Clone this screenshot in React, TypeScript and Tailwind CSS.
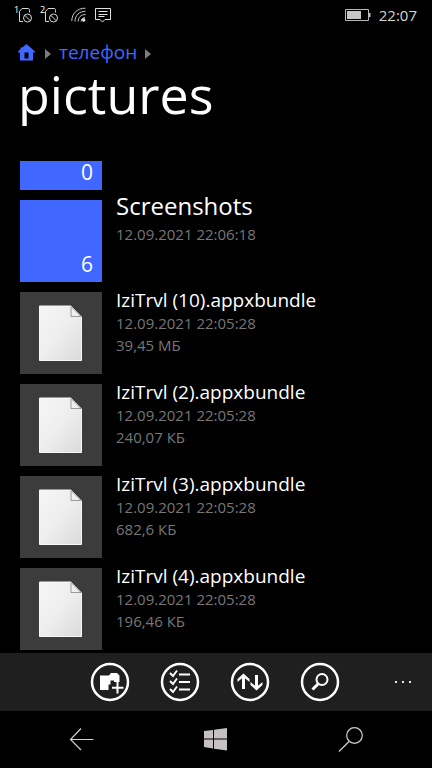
import React from "react";

type FileEntry = { name: string; date: string; size: string };

const files: FileEntry[] = [
  { name: "IziTrvl (10).appxbundle", date: "12.09.2021 22:05:28", size: "39,45 МБ" },
  { name: "IziTrvl (2).appxbundle", date: "12.09.2021 22:05:28", size: "240,07 КБ" },
  { name: "IziTrvl (3).appxbundle", date: "12.09.2021 22:05:28", size: "682,6 КБ" },
  { name: "IziTrvl (4).appxbundle", date: "12.09.2021 22:05:28", size: "196,46 КБ" },
];

function SimIcon({ slot }: { slot: string }) {
  return (
    <span className="flex items-start">
      <span className="w-1 text-[9px] leading-[8px] text-white">{slot}</span>
      <svg width="15" height="18" viewBox="0 0 15 18" fill="none" stroke="#d8d8d8">
        <path d="M5 15.5H1.5V5.5L4 2.5H10.5C11.5 2.5 11.5 4 11.5 6.5" />
        <circle cx="9.5" cy="12" r="4" />
        <path d="M6.7 9.2L12.3 14.8" />
      </svg>
    </span>
  );
}

function StatusBar() {
  return (
    <div className="flex h-[30px] shrink-0 items-center pl-[14px] pr-[15px]">
      <div className="flex flex-1 items-center">
        <SimIcon slot="1" />
        <span className="w-[7px]" />
        <SimIcon slot="2" />
        <svg className="ml-3" width="16" height="16" viewBox="0 0 16 16" fill="none" stroke="#c8c8c8">
          <path d="M.8 14C.8 6.500 6 1.200 14.500 1.200M4 14.500C4 8.500 8 4.300 14.500 4.300M7.200 14.500C7.200 10.500 10 7.500 14.500 7.500" />
          <path d="M10.200 14.500C10.200 12.300 11.500 10.700 14 10.600" />
          <circle cx="12.700" cy="13" r="1.700" fill="#e8e8e8" stroke="none" />
        </svg>
        <svg className="ml-[7px]" width="18" height="16" viewBox="0 0 18 16" fill="none" stroke="#e2e2e2">
          <path d="M1.500 1.500H16.500V12.500H11L8.500 15L6 12.500H1.500Z" />
          <path d="M4.500 4.500H13.500M4.500 7.500H13.500M4.500 9.500H10.500" />
        </svg>
      </div>
      <svg width="27" height="14" viewBox="0 0 27 14" fill="none">
        <path d="M1.500 1.500H24.500V12.500H1.500Z" stroke="#b9b9b9" />
        <path d="M3 3H17V11H3Z" fill="#c6c6c6" />
        <path d="M25 5H26.500V9H25Z" fill="#c6c6c6" />
      </svg>
      <time className="ml-2 text-[15px] leading-5 text-[#d4d4d4]">22:07</time>
    </div>
  );
}

function Chevron() {
  return (
    <svg width="6" height="10" viewBox="0 0 6 10" fill="#7c7c7c">
      <path d="M0 0L6 5L0 10Z" />
    </svg>
  );
}

function Header() {
  return (
    <header className="h-[131px] shrink-0 px-[18px]">
      <nav className="flex h-[44px] items-center" aria-label="Breadcrumb">
        <a href="#home" aria-label="Home">
          <svg width="17" height="17" viewBox="0 0 17 17" fill="#4067ff">
            <path fillRule="evenodd" d="M8.500 0L17 7.500V8.500H15V16.500H2V8.500H0V7.500L2.500 5V3.500H4.200ZM6.500 8.500V14.500H10.500V8.500Z" />
          </svg>
        </a>
        <span className="ml-[10px] mr-2 mt-1"><Chevron /></span>
        <a href="#phone" className="text-[19px] leading-6 text-[#4067ff]">телефон</a>
        <span className="ml-2 mt-1"><Chevron /></span>
      </nav>
      <h1 className="text-[52px] font-normal leading-10 text-white">pictures</h1>
    </header>
  );
}

function FileGlyph() {
  return (
    <svg width="44" height="56" viewBox="0 0 44 56">
      <defs>
        <linearGradient id="paper" x1="0" y1="0" x2="1" y2="1">
          <stop offset="0" stopColor="#f6f6f6" />
          <stop offset="0.5" stopColor="#eeeeee" />
          <stop offset="1" stopColor="#dadada" />
        </linearGradient>
      </defs>
      <path d="M.5 1H32L42.500 12V55.500H.5Z" fill="url(#paper)" stroke="#f8f8f8" />
      <path d="M32 1.500V11.500H42Z" fill="#efefef" stroke="#999" />
    </svg>
  );
}

function FolderTile({ count }: { count: number }) {
  return (
    <div className="flex h-[82px] w-[82px] shrink-0 items-end justify-end bg-[#4067ff] px-[9px] py-[3px] text-[21px] leading-[30px] text-white">
      {count}
    </div>
  );
}

function FileList() {
  return (
    <ul className="flex min-h-0 flex-1 flex-col gap-[10px] overflow-hidden px-5">
      <li className="flex h-[29px] shrink-0 items-end overflow-hidden">
        <FolderTile count={0} />
      </li>
      <li className="flex shrink-0 gap-[14px]">
        <FolderTile count={6} />
        <div className="flex-1">
          <h2 className="-mt-[10px] text-2xl leading-8">Screenshots</h2>
          <p className="text-[15px] leading-6 text-[#777]">12.09.2021 22:06:18</p>
        </div>
      </li>
      {files.map((file) => (
        <li key={file.name} className="flex shrink-0 gap-[14px]">
          <div className="flex h-[82px] w-[82px] shrink-0 items-center justify-center bg-[#3c3c3c]">
            <FileGlyph />
          </div>
          <div className="h-[82px] flex-1">
            <h2 className="-mt-1 text-[19px] leading-6">{file.name}</h2>
            <p className="text-[15px] leading-[22px] text-[#777]">{file.date}</p>
            <p className="text-[15px] leading-[22px] text-[#777]">{file.size}</p>
          </div>
        </li>
      ))}
    </ul>
  );
}

function RoundButton({ label, children }: { label: string; children: React.ReactNode }) {
  return (
    <button type="button" aria-label={label}>
      <svg width="40" height="40" viewBox="0 0 40 40" fill="none" stroke="white">
        <circle cx="20" cy="20" r="18" strokeWidth="2.500" />
        {children}
      </svg>
    </button>
  );
}

function AppBar() {
  return (
    <div className="grid h-[58px] shrink-0 grid-cols-[1fr_auto_1fr] items-center bg-[#1f1f1f]">
      <span />
      <div className="flex gap-[30px] pr-[2px]">
        <RoundButton label="New folder">
          <path d="M10 13.500H19L21 11H27L29.500 13.500V20H24V18.500H20.500V22.500H18.500V28H10Z" fill="white" stroke="none" />
          <path d="M27.500 20V31.500M22 25.700H33.500" strokeWidth="2" />
        </RoundButton>
        <RoundButton label="Select">
          <path d="M10 11L13 14L17 8.500M10 19L13 22L17 16.500M10 27L13 30L17 24.500" strokeWidth="1.800" />
          <path d="M19 12.500H30M19 20H30M19 27.500H30" strokeWidth="2" />
        </RoundButton>
        <RoundButton label="Sort">
          <path d="M13.500 27V15M26.500 13V25" strokeWidth="3" />
          <path d="M7.500 20V17L13.500 11.500L19.500 17V20L13.500 15ZM20.500 20V23L26.500 28.500L32.500 23V20L26.500 25Z" fill="white" stroke="none" />
        </RoundButton>
        <RoundButton label="Search">
          <circle cx="22" cy="17.500" r="5.500" strokeWidth="2" />
          <path d="M18 22L12.500 27.500" strokeWidth="3" />
        </RoundButton>
      </div>
      <button type="button" aria-label="More" className="flex justify-end pr-5">
        <svg width="18" height="4" viewBox="0 0 18 4" fill="#e6e6e6">
          <path d="M1 1H3V3H1ZM8 1H10V3H8ZM15 1H17V3H15Z" />
        </svg>
      </button>
    </div>
  );
}

function SystemBar() {
  return (
    <nav className="flex h-[57px] shrink-0 items-center justify-between px-[68px]" aria-label="System">
      <button type="button" aria-label="Back">
        <svg width="26" height="24" viewBox="0 0 26 24" fill="none" stroke="#d0d0d0" strokeWidth="1.200">
          <path d="M25.500 11.500H2.500M13 .5L2.500 11.500L13 22" />
        </svg>
      </button>
      <button type="button" aria-label="Start">
        <svg width="24" height="24" viewBox="0 0 24 24" fill="#c6c0c3">
          <path d="M0 3L9 2V10.500H0ZM10 1.800L23 0V10.500H10ZM0 11.500H9V20.500L0 19ZM10 11.500H23V22.500L10 20.700Z" />
        </svg>
      </button>
      <button type="button" aria-label="Search">
        <svg width="26" height="26" viewBox="0 0 26 26" fill="none" stroke="#d0d0d0" strokeWidth="1.200">
          <circle cx="16.500" cy="8.500" r="7.800" />
          <path d="M11 14.500L1 24.500" />
        </svg>
      </button>
    </nav>
  );
}

export default function App() {
  return (
    <main className="flex h-screen flex-col overflow-hidden bg-black font-['Open_Sans','Noto_Sans',sans-serif] text-white">
      <StatusBar />
      <Header />
      <FileList />
      <AppBar />
      <SystemBar />
    </main>
  );
}
